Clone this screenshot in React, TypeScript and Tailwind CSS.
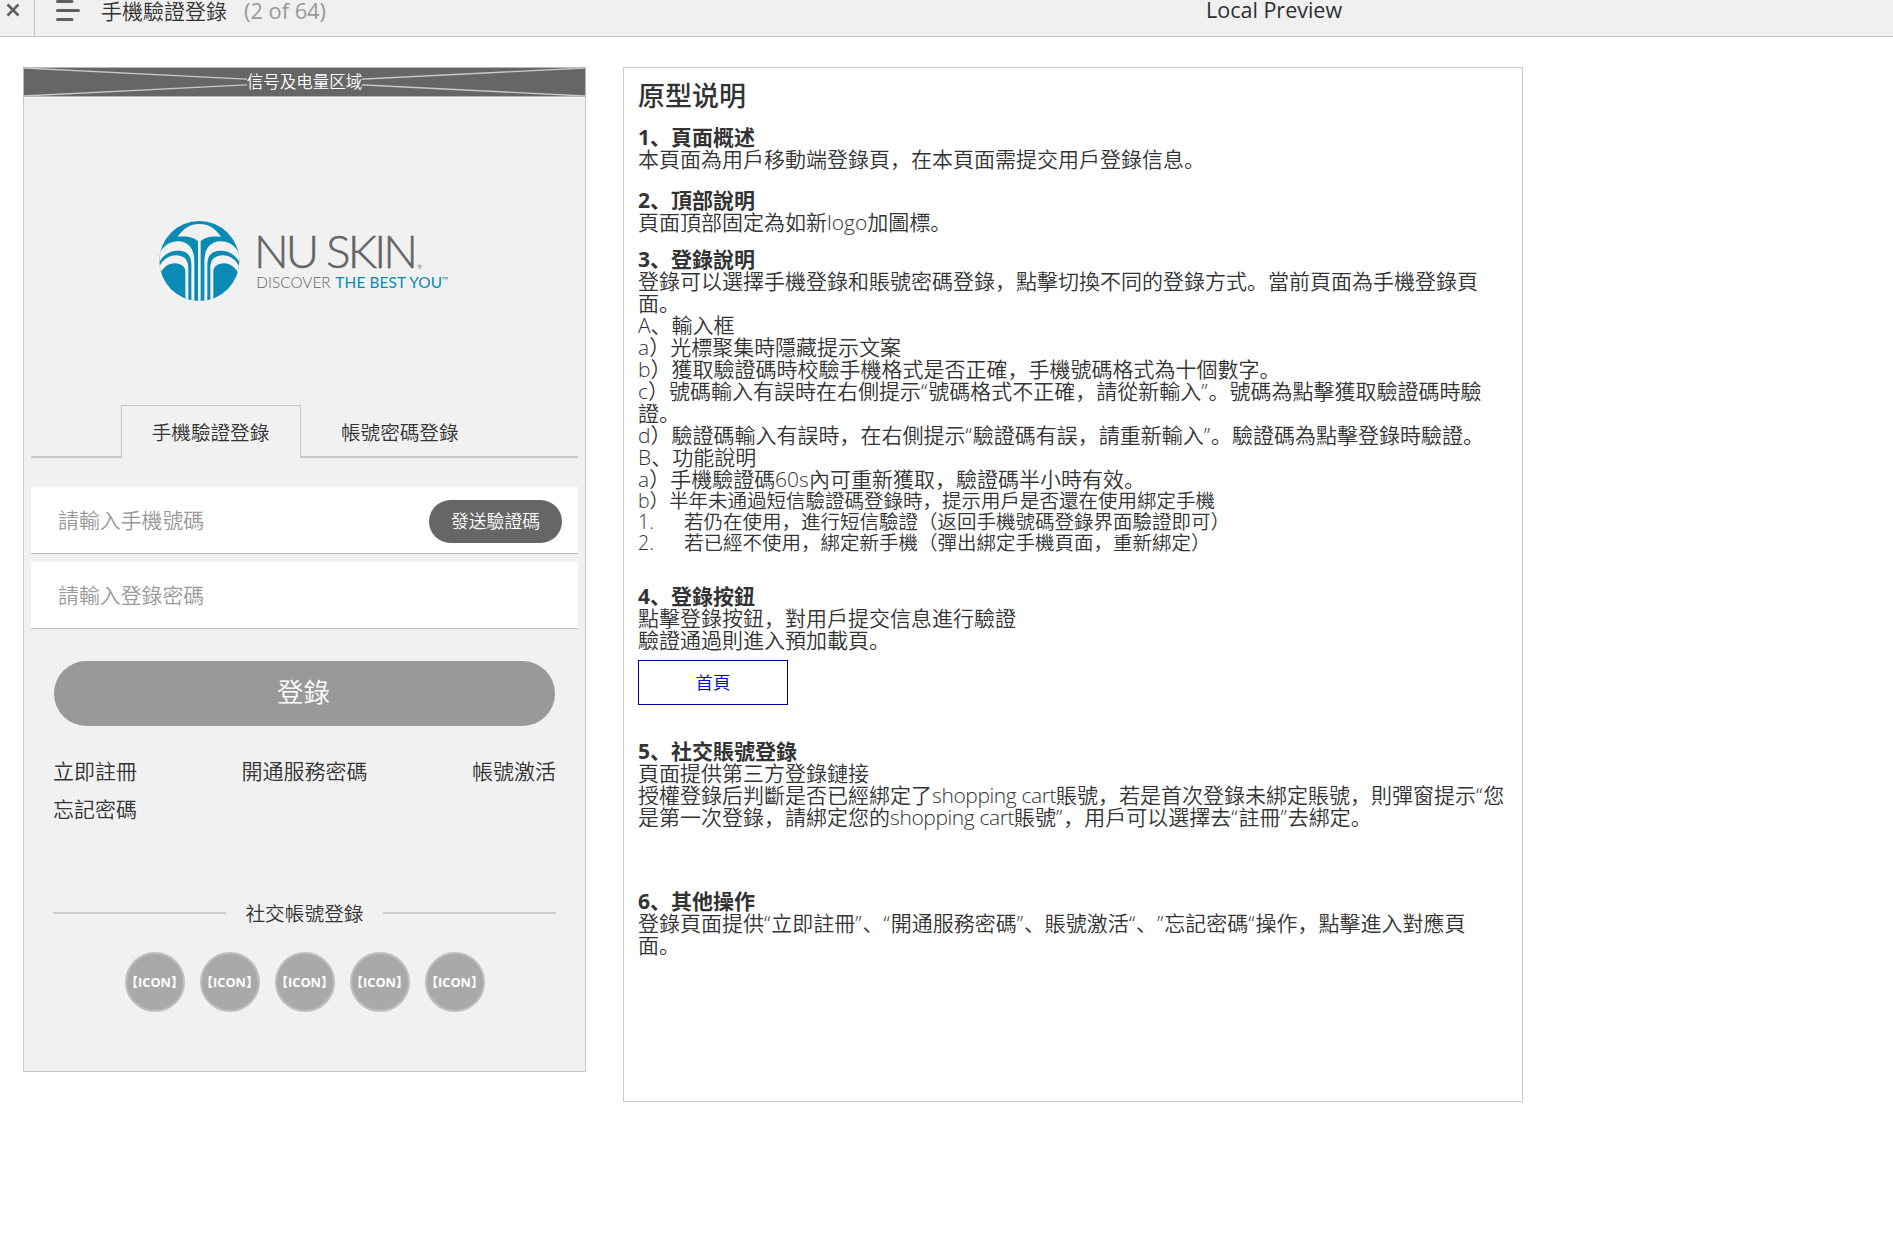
import { ReactNode } from 'react';

const icons = [1, 2, 3, 4, 5];

// curly quotes get a little more room than the font gives them
function spaceQuotes(text: string) {
  return text.split(/([“”])/).map((part, i) =>
    part === '“' || part === '”' ? (
      <span key={i} className="tracking-[0.9px]">
        {part}
      </span>
    ) : (
      part
    )
  );
}

function Line({ children }: { children: ReactNode }) {
  return (
    <p className="h-[22px] leading-[22px] whitespace-nowrap">
      {typeof children === 'string' ? spaceQuotes(children) : children}
    </p>
  );
}

function Heading({ children }: { children: ReactNode }) {
  return <h2 className="h-[22px] leading-[22px] font-bold whitespace-nowrap">{children}</h2>;
}

// one half of the fountain, the other half is mirrored
function Fountain() {
  return (
    <>
      <path d="M54 172 C66 132 98 122 118 124 C150 128 163 150 163 185 V306 H154 V195 C154 165 140 152 113 152 C90 152 70 163 56 190 Z" />
      <path d="M54 212 C62 180 88 165 110 166 C135 168 145 180 145 205 V306 H136 V215 C136 198 120 190 104 190 C85 190 70 202 56 226 Z" />
    </>
  );
}

function Logo() {
  return (
    <svg viewBox="0 0 990 360" className="h-[120px] w-[330px]">
      <clipPath id="disc">
        <circle cx="178" cy="183" r="120" />
      </clipPath>
      <circle cx="178" cy="183" r="120" fill="#0a8ab5" />
      <g fill="#f1f1f1" clipPath="url(#disc)">
        <path d="M113 110 C130 85 150 72 178 72 C206 72 226 85 243 110 C215 107 190 112 178 128 C166 112 141 107 113 110 Z" />
        <Fountain />
        <g transform="translate(356 0) scale(-1 1)">
          <Fountain />
        </g>
        <rect x="174" y="124" width="8" height="182" />
      </g>
      <g fontFamily="Lato, sans-serif">
        <text x="342" y="204" fontSize="138" fontWeight="300" fill="#636466" stroke="#636466" strokeWidth="1.5" textLength="492">
          NU SKIN
        </text>
        <text x="832" y="206" fontSize="18" fontWeight="400" fill="#808080">
          ®
        </text>
        <text x="349" y="264" fontSize="46" fontWeight="300" fill="#636466" textLength="223">
          DISCOVER
        </text>
        <text x="586" y="264" fontSize="46" fontWeight="400" fill="#0a8ab5" textLength="320">
          THE BEST YOU
        </text>
        <text x="905" y="248" fontSize="26" fontWeight="400" fill="#0a8ab5">
          ™
        </text>
      </g>
    </svg>
  );
}

function Header() {
  return (
    <header className="flex h-[37px] border-b border-[#c2c5c8] bg-[#f0f0f0]">
      <div className="w-[35px] border-r border-[#c2c5c8] pt-[3px] pl-[6px]">
        <svg viewBox="0 0 14 14" className="size-[14px]" stroke="#606060" strokeWidth="2.6">
          <path d="M1.5 1.5 L12.5 12.5 M12.5 1.5 L1.5 12.5" />
        </svg>
      </div>
      <svg viewBox="0 0 24 24" className="ml-[21px] size-6" stroke="#606060" strokeWidth="3" strokeLinecap="round">
        <path d="M1.5 1.5 H16 M1.5 10.5 H22.5 M1.5 19.5 H16" />
      </svg>
      <h1 className="ml-[21px] h-6 text-[21px] leading-[23px] font-[350] text-[#333]">手機驗證登錄</h1>
      <span className="ml-[17px] h-[22px] w-[84px] text-[21.8px] leading-[22px] whitespace-nowrap text-[#999]">
        (2 of 64)
      </span>
      <span className="ml-[878px] h-[22px] text-[21.5px] leading-[20px] whitespace-nowrap text-[#2b2f33]">
        Local Preview
      </span>
    </header>
  );
}

function Phone() {
  return (
    <section className="h-[1005px] w-[563px] border border-[#c8c8c8] bg-[#f1f1f1] font-[350] text-[#333]">
      <div className="-m-px grid h-[30px] border border-[#b8b8b8] bg-[#666]">
        <svg
          viewBox="0 0 561 28"
          preserveAspectRatio="none"
          className="col-start-1 row-start-1 h-7 w-full"
          stroke="#c8c8c8"
          strokeWidth="1.4"
        >
          <path d="M0 0 L561 28 M0 28 L561 0" />
        </svg>
        <span className="col-start-1 row-start-1 self-center justify-self-center bg-[#666] text-[16.5px] leading-5 text-white">
          信号及电量区域
        </span>
      </div>

      <div className="mt-[104px] ml-[116px]">
        <Logo />
      </div>

      <nav className="mx-[7px] mt-[85px] flex h-[53px] text-[19.6px]">
        <span className="w-[90px] border-b-2 border-[#c9c9c9]" />
        <span className="w-[180px] border border-b-0 border-[#c6c6c6] pr-px text-center leading-[54px]">
          手機驗證登錄
        </span>
        <span className="flex-1 border-b-2 border-[#c9c9c9] pl-10 leading-[55px]">帳號密碼登錄</span>
      </nav>

      <div className="mx-[7px] mt-[29px] flex h-[67px] items-center justify-between border-b border-[#bbb] bg-white pt-[2px] pr-[16px] pl-[27px] text-[20.9px] text-[#999]">
        <span>請輸入手機號碼</span>
        <button className="h-[43px] w-[133px] rounded-full bg-[#666] text-[17.8px] text-white">發送驗證碼</button>
      </div>
      <div className="mx-[7px] mt-2 flex h-[67px] items-center border-b border-[#bbb] bg-white pt-[2px] pl-[27px] text-[20.9px] text-[#999]">
        請輸入登錄密碼
      </div>

      <button className="mt-8 ml-[30px] block h-[65px] w-[501px] rounded-full bg-[#999] pr-[2px] pb-[2px] text-[26.5px] text-white">
        登錄
      </button>

      <div className="mt-[31px] flex justify-between px-[29px] text-[21px] leading-[28px]">
        <span>立即註冊</span>
        <span>開通服務密碼</span>
        <span>帳號激活</span>
      </div>
      <div className="mt-[10px] px-[29px] text-[21px] leading-[28px]">忘記密碼</div>

      <div className="mt-[77px] flex items-center justify-between px-[29px] text-[19.7px] leading-7">
        <span className="mb-[2px] h-[2px] w-[173px] bg-[#ccc]" />
        <span>社交帳號登錄</span>
        <span className="mb-[2px] h-[2px] w-[173px] bg-[#ccc]" />
      </div>

      <div className="mt-6 flex justify-center gap-[15px]">
        {icons.map((i) => (
          <span
            key={i}
            className="flex size-[60px] items-center justify-center rounded-full border-2 border-[#bfbfbf] bg-[#a9a9a9] pt-px font-['Open_Sans','Noto_Sans_CJK_SC',sans-serif] text-[12.8px] font-bold whitespace-nowrap text-white"
          >
            <span className="-mx-4">【ICON】</span>
          </span>
        ))}
      </div>
    </section>
  );
}

function Notes() {
  return (
    <section className="h-[1035px] w-[900px] border border-[#c8c8c8] pl-[14px] text-[21px] font-[350] text-[#333]">
      <h1 className="mt-[12px] text-[27px] leading-8 font-medium">原型说明</h1>

      <div className="mt-[14px]">
        <Heading>1、頁面概述</Heading>
        <Line>本頁面為用戶移動端登錄頁，在本頁面需提交用戶登錄信息。</Line>
      </div>

      <div className="mt-[19px]">
        <Heading>2、頂部說明</Heading>
        <Line>頁面頂部固定為如新logo加圖標。</Line>
      </div>

      <div className="mt-[15px]">
        <Heading>3、登錄說明</Heading>
        <Line>登錄可以選擇手機登錄和賬號密碼登錄，點擊切換不同的登錄方式。當前頁面為手機登錄頁</Line>
        <Line>面。</Line>
        <Line>A、輸入框</Line>
        <Line>a）光標聚集時隱藏提示文案</Line>
        <Line>b）獲取驗證碼時校驗手機格式是否正確，手機號碼格式為十個數字。</Line>
        <Line>c）號碼輸入有誤時在右側提示“號碼格式不正確，請從新輸入”。號碼為點擊獲取驗證碼時驗</Line>
        <Line>證。</Line>
        <Line>d）驗證碼輸入有誤時，在右側提示“驗證碼有誤，請重新輸入”。驗證碼為點擊登錄時驗證。</Line>
        <Line>B、功能說明</Line>
        <Line>a）手機驗證碼60s內可重新獲取，驗證碼半小時有效。</Line>
        <div className="text-[19.5px]">
          <p className="h-[21px] leading-[21px]">b）半年未通過短信驗證碼登錄時，提示用戶是否還在使用綁定手機</p>
          <p className="flex h-[21px] leading-[21px]">
            <span className="w-[46px]">1.</span>若仍在使用，進行短信驗證（返回手機號碼登錄界面驗證即可）
          </p>
          <p className="flex h-[21px] leading-[21px]">
            <span className="w-[46px]">2.</span>若已經不使用，綁定新手機（彈出綁定手機頁面，重新綁定）
          </p>
        </div>
      </div>

      <div className="mt-[32px]">
        <Heading>4、登錄按鈕</Heading>
        <Line>點擊登錄按鈕，對用戶提交信息進行驗證</Line>
        <Line>驗證通過則進入預加載頁。</Line>
        <button className="mt-[9px] block h-[45px] w-[150px] border border-[#000099] text-[17.5px] text-[#0000e0]">
          首頁
        </button>
      </div>

      <div className="mt-[35px]">
        <Heading>5、社交賬號登錄</Heading>
        <Line>頁面提供第三方登錄鏈接</Line>
        <Line>
          授權登錄后判斷是否已經綁定了<span className="tracking-[-0.4px]">shopping cart</span>
          {spaceQuotes('賬號，若是首次登錄未綁定賬號，則彈窗提示“您')}
        </Line>
        <Line>
          是第一次登錄，請綁定您的<span className="tracking-[-0.4px]">shopping cart</span>
          {spaceQuotes('賬號”，用戶可以選擇去“註冊”去綁定。')}
        </Line>
      </div>

      <div className="mt-[62px]">
        <Heading>6、其他操作</Heading>
        <Line>登錄頁面提供“立即註冊”、“開通服務密碼”、賬號激活“、”忘記密碼“操作，點擊進入對應頁</Line>
        <Line>面。</Line>
      </div>
    </section>
  );
}

export default function App() {
  return (
    <div
      className="min-h-[1245px] bg-white font-['Open_Sans','Noto_Sans_CJK_SC',sans-serif] [text-spacing-trim:space-all]"
      lang="zh-CN"
    >
      <Header />
      <main className="flex gap-[37px] pt-[30px] pl-[23px]">
        <Phone />
        <Notes />
      </main>
    </div>
  );
}
